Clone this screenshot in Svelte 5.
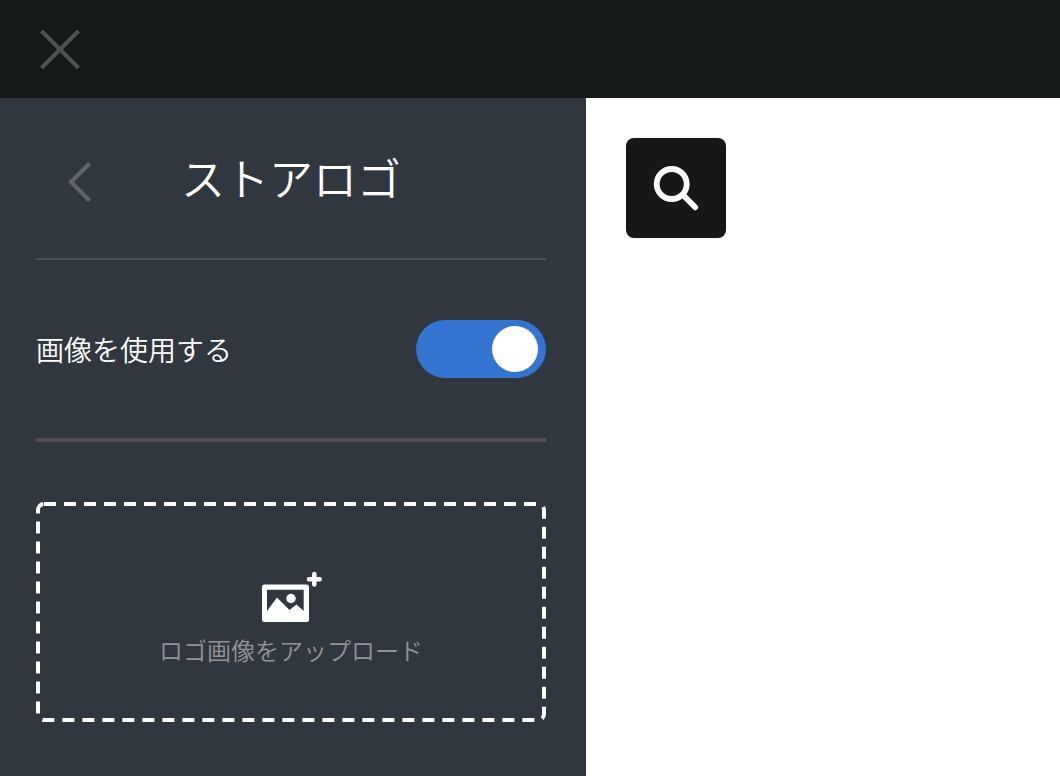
<script>
  let useImage = $state(true);
</script>

<div class="app">
  <header class="topbar">
    <button class="icon-button" type="button" aria-label="閉じる">
      <svg width="40" height="40" viewBox="0 0 40 40" fill="none" stroke="#505252" stroke-width="4">
        <path d="M1.5 2 38.5 39M38.5 2 1.5 39" />
      </svg>
    </button>
  </header>

  <div class="body">
    <aside class="panel">
      <div class="heading">
        <button class="icon-button" type="button" aria-label="戻る">
          <svg width="24" height="40" viewBox="0 0 24 40" fill="none" stroke="#62666a" stroke-width="4">
            <path d="M21.5 1.500 3 20 21.5 38.500" />
          </svg>
        </button>
        <h1>ストアロゴ</h1>
      </div>

      <div class="setting">
        <label for="use-image">画像を使用する</label>
        <input id="use-image" class="switch" type="checkbox" role="switch" bind:checked={useImage} />
      </div>

      <button class="upload" type="button">
        <svg class="outline" aria-hidden="true">
          <rect x="2" y="2" rx="6" />
        </svg>
        <svg width="62" height="53" viewBox="-2 0 62 53" fill="#fff" aria-hidden="true">
          <path fill-rule="evenodd" d="M2.500 13.500H44.500a2.500 2.500 0 0 1 2.500 2.500V48.500a2.500 2.500 0 0 1-2.500 2.500H2.500a2.500 2.500 0 0 1-2.500-2.500V16a2.500 2.500 0 0 1 2.500-2.500ZM5 18.700V40L15 26.500 27.500 39 34.500 33.500 41.700 40V18.700Z" />
          <circle cx="29" cy="27.500" r="4.700" />
          <path d="M52.300 3V13.500M47 8.200H57.700" fill="none" stroke="#fff" stroke-width="4.500" stroke-linecap="round" />
        </svg>
        <span>ロゴ画像をアップロード</span>
      </button>
    </aside>

    <main class="preview">
      <button class="search" type="button" aria-label="検索">
        <svg width="46" height="46" viewBox="0 0 46 46" fill="none" stroke="#fff" aria-hidden="true">
          <circle cx="18.700" cy="19" r="15" stroke-width="5.800" />
          <path d="M30 30 42.200 42.300" stroke-width="5.800" stroke-linecap="round" />
        </svg>
      </button>
    </main>
  </div>
</div>

<style>
  :global(body) {
    margin: 0;
    background: #fff;
  }

  .app {
    display: flex;
    flex-direction: column;
    min-height: 100vh;
    font-family: "Noto Sans CJK JP", sans-serif;
    font-weight: 350;
    color: #fff;
  }

  button {
    margin: 0;
    padding: 0;
    border: 0;
    font: inherit;
    color: inherit;
    cursor: pointer;
  }

  svg {
    display: block;
  }

  .icon-button {
    background: none;
  }

  .topbar {
    display: flex;
    align-items: center;
    height: 98px;
    padding: 0 40px;
    background: #151919;
  }

  .body {
    display: flex;
    flex: 1;
  }

  .panel {
    flex: 0 0 586px;
    box-sizing: border-box;
    padding: 0 40px 54px 36px;
    background: #31373f;
  }

  .heading {
    display: grid;
    grid-template-columns: 56px 1fr 56px;
    align-items: center;
    box-sizing: border-box;
    height: 162px;
    padding-top: 8px;
    border-bottom: 2px solid #4f5059;
  }

  .heading .icon-button {
    justify-self: end;
  }

  h1 {
    margin: 0;
    padding-bottom: 10px;
    font-size: 44px;
    font-weight: inherit;
    line-height: 64px;
    text-align: center;
  }

  .setting {
    display: flex;
    align-items: center;
    justify-content: space-between;
    padding: 60px 0;
    border-bottom: 4px solid #4f5059;
    font-size: 28px;
    line-height: 40px;
  }

  .switch {
    appearance: none;
    display: flex;
    align-items: center;
    box-sizing: border-box;
    width: 130px;
    height: 58px;
    margin: 0;
    padding: 0 8px;
    border-radius: 29px;
    background: #62666a;
    cursor: pointer;
  }

  .switch::before {
    content: "";
    width: 46px;
    height: 46px;
    border-radius: 50%;
    background: #fff;
  }

  .switch:checked {
    justify-content: flex-end;
    background: #3375d1;
  }

  .upload {
    position: relative;
    display: flex;
    flex-direction: column;
    align-items: center;
    justify-content: center;
    gap: 8px;
    width: 100%;
    height: 220px;
    margin-top: 60px;
    padding-top: 15px;
    background: none;
    font-size: 24px;
    line-height: 36px;
  }

  .upload span {
    color: #939495;
  }

  .outline {
    position: absolute;
    inset: 0;
    width: 100%;
    height: 100%;
  }

  .outline rect {
    width: calc(100% - 4px);
    height: calc(100% - 4px);
    fill: none;
    stroke: #fff;
    stroke-width: 4px;
    stroke-dasharray: 12 8;
  }

  .preview {
    flex: 1;
    padding: 40px;
    background: #fff;
  }

  .search {
    display: flex;
    align-items: center;
    justify-content: center;
    width: 100px;
    height: 100px;
    border-radius: 8px;
    background: #171717;
  }
</style>
